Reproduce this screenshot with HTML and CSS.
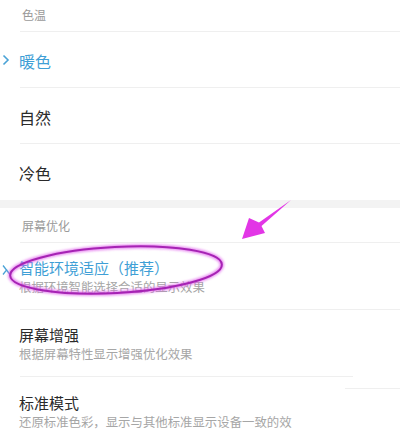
FILE: index.html
```html
<!DOCTYPE html>
<html lang="zh-CN">
<head>
<meta charset="utf-8">
<link rel="stylesheet" href="styles.css">
</head>
<body>
<div class="page">
  <div class="section-label"><span class="label-text">色温</span></div>
  <div class="row">
    <div class="marker">
      <svg width="8" height="12" viewBox="0 0 8 12"><path d="M1.5 1.5 L6 6 L1.5 10.5" fill="none" stroke="#4aa2d6" stroke-width="1.6"/></svg>
    </div>
    <div class="content"><span class="title active">暖色</span></div>
  </div>
  <div class="row">
    <div class="marker"></div>
    <div class="content"><span class="title">自然</span></div>
  </div>
  <div class="row">
    <div class="marker"></div>
    <div class="content last"><span class="title">冷色</span></div>
  </div>
  <div class="band"></div>
  <div class="section-label second"><span class="label-text">屏幕优化</span></div>
  <div class="row tall">
    <div class="marker">
      <svg width="9" height="12" viewBox="0 0 9 12"><path d="M1 1.5 L8 10.5 M1 10.5 L5 5.3" fill="none" stroke="#4aa2d6" stroke-width="1.3"/></svg>
    </div>
    <div class="content">
      <span class="title active mid">智能环境适应（推荐）</span>
      <span class="sub">根据环境智能选择合适的显示效果</span>
    </div>
  </div>
  <div class="row tall">
    <div class="marker"></div>
    <div class="content short">
      <span class="title mid">屏幕增强</span>
      <span class="sub">根据屏幕特性显示增强优化效果</span>
    </div>
  </div>
  <div class="row tall">
    <div class="marker"></div>
    <div class="content last">
      <span class="title mid">标准模式</span>
      <span class="sub">还原标准色彩，显示与其他标准显示设备一致的效</span>
    </div>
  </div>
  <div class="stray-line"></div>
  <svg class="annotation" width="400" height="437" viewBox="0 0 400 437">
    <defs>
      <filter id="glow" x="-10%" y="-30%" width="120%" height="160%">
        <feGaussianBlur stdDeviation="1"/>
      </filter>
    </defs>
    <ellipse cx="116" cy="270" rx="106" ry="23" transform="rotate(-3 116 270)" fill="none" stroke="#e060ec" stroke-width="4.5" opacity="0.7" filter="url(#glow)"/>
    <ellipse cx="116" cy="270" rx="106" ry="23" transform="rotate(-3 116 270)" fill="none" stroke="#a623b4" stroke-width="2"/>
    <path d="M291 200 L259 222.5 L249 218 L242 239 L265 233 L261.5 226 Z" fill="#e236e6"/>
  </svg>
</div>
</body>
</html>
```

FILE: styles.css
```css
html, body {
  margin: 0;
  padding: 0;
  background: #ffffff;
}

.page {
  position: relative;
  width: 400px;
  height: 437px;
  overflow: hidden;
  font-family: "Noto Sans CJK SC", "Noto Sans", sans-serif;
  background: #ffffff;
}

.section-label {
  height: 32px;
  margin-left: 20px;
  border-bottom: 1px solid #efefef;
  box-sizing: border-box;
  display: flex;
  align-items: center;
  padding-left: 2px;
  padding-bottom: 3px;
}

.section-label.second {
  height: 35px;
  padding-bottom: 0;
}

.label-text {
  font-size: 12px;
  color: #9a9a9a;
}

.row {
  display: flex;
  height: 56px;
}

.row.tall {
  height: 67px;
}

.marker {
  width: 19px;
  flex: none;
  display: flex;
  align-items: center;
  justify-content: flex-start;
  padding-left: 2px;
  box-sizing: border-box;
}

.row.tall .marker {
  align-items: flex-start;
  padding-top: 21px;
}

.content {
  flex: 1;
  display: flex;
  flex-direction: column;
  justify-content: center;
  border-bottom: 1px solid #efefef;
  box-sizing: border-box;
  margin-left: 1px;
  padding-top: 2px;
}

.content.last {
  border-bottom: none;
}

.content.short {
  margin-right: 47px;
}

.title {
  font-size: 16px;
  line-height: 20px;
  font-weight: 400;
  color: #2a2a2a;
  margin-left: -1px;
}

.title.mid {
  font-size: 15px;
}

.title.active {
  color: #3f9fd6;
}

.sub {
  font-size: 12.4px;
  line-height: 17px;
  color: #a6a6a6;
  margin-left: -1px;
  margin-top: 1px;
  white-space: nowrap;
}

.band {
  height: 8px;
  background: #f3f3f3;
}

.stray-line {
  position: absolute;
  left: 345px;
  top: 388px;
  width: 55px;
  height: 1px;
  background: #efefef;
}

.annotation {
  position: absolute;
  left: 0;
  top: 0;
  pointer-events: none;
}
```
